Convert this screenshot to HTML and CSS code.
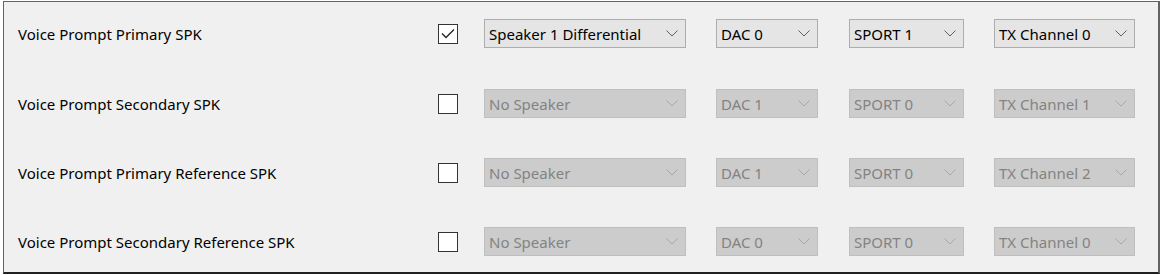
FILE: index.html
```html
<!DOCTYPE html>
<html lang="en">
<head>
    <meta charset="UTF-8">
    <title>Voice Prompt Speakers</title>
    <link rel="stylesheet" href="styles.css">
</head>
<body>
    <div class="panel">
        <!-- Primary -->
        <div class="row">
            <div class="label">Voice Prompt Primary SPK</div>
            <div class="check checked">
                <svg width="14" height="11" viewBox="0 0 14 11"><path d="M1 5.5 L5 9.5 L13 1.5" fill="none" stroke="#222" stroke-width="1.3"/></svg>
            </div>
            <div class="combo combo-spk"><span>Speaker 1 Differential</span><svg class="arrow" width="12" height="7" viewBox="0 0 12 7"><path d="M0.5 0.5 L6 6 L11.5 0.5" fill="none" stroke-width="1"/></svg></div>
            <div class="combo combo-dac"><span>DAC 0</span><svg class="arrow" width="12" height="7" viewBox="0 0 12 7"><path d="M0.5 0.5 L6 6 L11.5 0.5" fill="none" stroke-width="1"/></svg></div>
            <div class="combo combo-sport"><span>SPORT 1</span><svg class="arrow" width="12" height="7" viewBox="0 0 12 7"><path d="M0.5 0.5 L6 6 L11.5 0.5" fill="none" stroke-width="1"/></svg></div>
            <div class="combo combo-tx"><span>TX Channel 0</span><svg class="arrow" width="12" height="7" viewBox="0 0 12 7"><path d="M0.5 0.5 L6 6 L11.5 0.5" fill="none" stroke-width="1"/></svg></div>
        </div>

        <!-- Secondary -->
        <div class="row">
            <div class="label">Voice Prompt Secondary SPK</div>
            <div class="check"></div>
            <div class="combo combo-spk disabled"><span>No Speaker</span><svg class="arrow" width="12" height="7" viewBox="0 0 12 7"><path d="M0.5 0.5 L6 6 L11.5 0.5" fill="none" stroke-width="1"/></svg></div>
            <div class="combo combo-dac disabled"><span>DAC 1</span><svg class="arrow" width="12" height="7" viewBox="0 0 12 7"><path d="M0.5 0.5 L6 6 L11.5 0.5" fill="none" stroke-width="1"/></svg></div>
            <div class="combo combo-sport disabled"><span>SPORT 0</span><svg class="arrow" width="12" height="7" viewBox="0 0 12 7"><path d="M0.5 0.5 L6 6 L11.5 0.5" fill="none" stroke-width="1"/></svg></div>
            <div class="combo combo-tx disabled"><span>TX Channel 1</span><svg class="arrow" width="12" height="7" viewBox="0 0 12 7"><path d="M0.5 0.5 L6 6 L11.5 0.5" fill="none" stroke-width="1"/></svg></div>
        </div>

        <!-- Primary reference -->
        <div class="row">
            <div class="label">Voice Prompt Primary Reference SPK</div>
            <div class="check"></div>
            <div class="combo combo-spk disabled"><span>No Speaker</span><svg class="arrow" width="12" height="7" viewBox="0 0 12 7"><path d="M0.5 0.5 L6 6 L11.5 0.5" fill="none" stroke-width="1"/></svg></div>
            <div class="combo combo-dac disabled"><span>DAC 1</span><svg class="arrow" width="12" height="7" viewBox="0 0 12 7"><path d="M0.5 0.5 L6 6 L11.5 0.5" fill="none" stroke-width="1"/></svg></div>
            <div class="combo combo-sport disabled"><span>SPORT 0</span><svg class="arrow" width="12" height="7" viewBox="0 0 12 7"><path d="M0.5 0.5 L6 6 L11.5 0.5" fill="none" stroke-width="1"/></svg></div>
            <div class="combo combo-tx disabled"><span>TX Channel 2</span><svg class="arrow" width="12" height="7" viewBox="0 0 12 7"><path d="M0.5 0.5 L6 6 L11.5 0.5" fill="none" stroke-width="1"/></svg></div>
        </div>

        <!-- Secondary reference -->
        <div class="row">
            <div class="label">Voice Prompt Secondary Reference SPK</div>
            <div class="check"></div>
            <div class="combo combo-spk disabled"><span>No Speaker</span><svg class="arrow" width="12" height="7" viewBox="0 0 12 7"><path d="M0.5 0.5 L6 6 L11.5 0.5" fill="none" stroke-width="1"/></svg></div>
            <div class="combo combo-dac disabled"><span>DAC 0</span><svg class="arrow" width="12" height="7" viewBox="0 0 12 7"><path d="M0.5 0.5 L6 6 L11.5 0.5" fill="none" stroke-width="1"/></svg></div>
            <div class="combo combo-sport disabled"><span>SPORT 0</span><svg class="arrow" width="12" height="7" viewBox="0 0 12 7"><path d="M0.5 0.5 L6 6 L11.5 0.5" fill="none" stroke-width="1"/></svg></div>
            <div class="combo combo-tx disabled"><span>TX Channel 0</span><svg class="arrow" width="12" height="7" viewBox="0 0 12 7"><path d="M0.5 0.5 L6 6 L11.5 0.5" fill="none" stroke-width="1"/></svg></div>
        </div>
    </div>
</body>
</html>
```

FILE: styles.css
```css
body {
    margin: 0;
    background-color: #ffffff;
    font-family: "Noto Sans", "Open Sans", sans-serif;
    font-size: 15px;
    color: #000;
}

.panel {
    box-sizing: border-box;
    width: 1157px;
    height: 273px;
    margin: 1px 0 0 3px;
    border: 1px solid #646464;
    border-right-width: 2px;
    border-bottom: 2px solid #202020;
    background-color: #f0f0f0;
    display: flex;
    flex-direction: column;
    gap: 40px;
    padding-top: 17px;
}

.row {
    display: flex;
    align-items: center;
    height: 29px;
}

.row:first-child {
    margin-bottom: 1px;
}

.label {
    width: 420px;
    padding-left: 14px;
}

.check {
    box-sizing: border-box;
    width: 20px;
    height: 20px;
    border: 1px solid #333;
    background-color: #fff;
    display: flex;
    align-items: center;
    justify-content: center;
}

.combo {
    box-sizing: border-box;
    height: 29px;
    border: 1px solid #adadad;
    background-color: #e5e5e5;
    display: flex;
    align-items: center;
    justify-content: space-between;
    padding: 0 7px 0 4px;
}

.combo .arrow {
    stroke: #606060;
}

.combo.disabled {
    background-color: #cccccc;
    border-color: #bfbfbf;
    color: #838383;
}

.combo.disabled .arrow {
    stroke: #a8a8a8;
}

.combo-spk {
    width: 202px;
    margin-left: 26px;
}

.combo-dac {
    width: 102px;
    margin-left: 30px;
}

.combo-sport {
    width: 115px;
    margin-left: 31px;
}

.combo-tx {
    width: 141px;
    margin-left: 30px;
}
```
